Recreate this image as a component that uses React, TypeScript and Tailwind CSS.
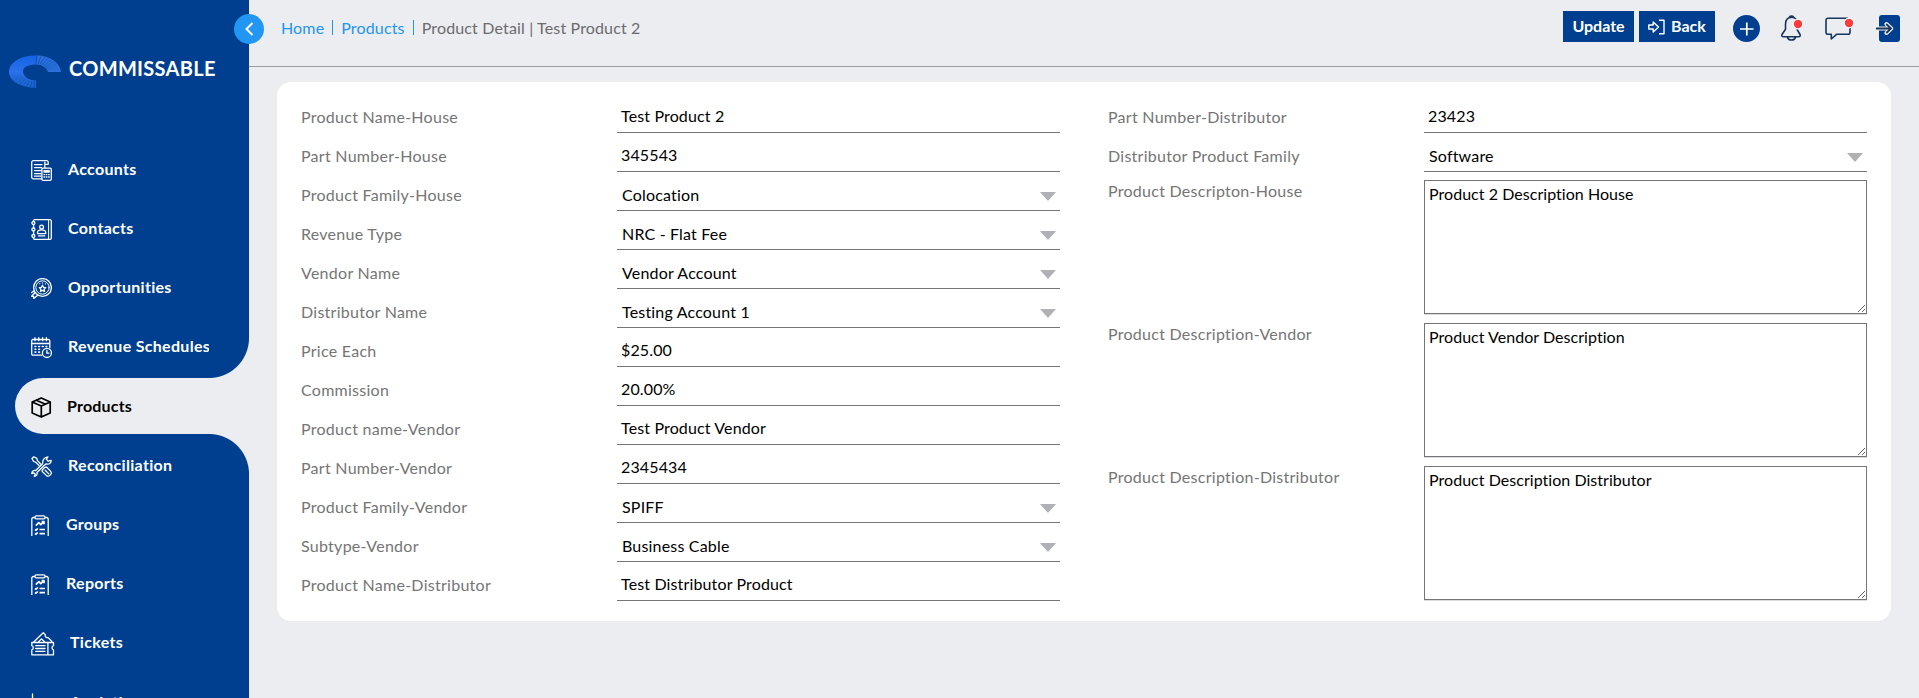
import React, { ReactNode } from "react";

type Row = { label: string; value: string; select?: boolean };

const leftRows: Row[] = [
  { label: "Product Name-House", value: "Test Product 2" },
  { label: "Part Number-House", value: "345543" },
  { label: "Product Family-House", value: "Colocation", select: true },
  { label: "Revenue Type", value: "NRC - Flat Fee", select: true },
  { label: "Vendor Name", value: "Vendor Account", select: true },
  { label: "Distributor Name", value: "Testing Account 1", select: true },
  { label: "Price Each", value: "$25.00" },
  { label: "Commission", value: "20.00%" },
  { label: "Product name-Vendor", value: "Test Product Vendor" },
  { label: "Part Number-Vendor", value: "2345434" },
  { label: "Product Family-Vendor", value: "SPIFF", select: true },
  { label: "Subtype-Vendor", value: "Business Cable", select: true },
  { label: "Product Name-Distributor", value: "Test Distributor Product" },
];

const rightRows: Row[] = [
  { label: "Part Number-Distributor", value: "23423" },
  { label: "Distributor Product Family", value: "Software", select: true },
];

const descriptions: Row[] = [
  { label: "Product Descripton-House", value: "Product 2 Description House" },
  { label: "Product Description-Vendor", value: "Product Vendor Description" },
  { label: "Product Description-Distributor", value: "Product Description Distributor" },
];

function Icon({ w = 21, h = 21, children }: { w?: number; h?: number; children: ReactNode }) {
  return (
    <svg width={w} height={h} viewBox={`0 0 ${w} ${h}`} fill="none" stroke="currentColor" strokeWidth="1.3" strokeLinecap="round" strokeLinejoin="round" className="mt-[3px] shrink-0">
      {children}
    </svg>
  );
}

const AccountsIcon = () => (
  <Icon>
    <path d="M10.500 18.800H2.200a1.500 1.500 0 0 1-1.500-1.500V2.200A1.500 1.500 0 0 1 2.200.7h13.300a1.600 1.600 0 0 1 1.700 1.700v1.900h-3.400V2.200M13.800 4v3.500M3.500 4.600h7.500M3.500 7.600h7M3.500 10.600h6.500M3.500 13.600h6.300M3.500 16.200h6.300" />
    <rect x="10.9" y="8.1" width="9.4" height="12.2" rx="1.2" />
    <path d="M13 10.600h5.200v1.400H13zM13 14.600h.6M15.300 14.600h.6M17.600 14.600h.6M13 17h.6M15.300 17h.6M17.600 17h.6" />
  </Icon>
);

const ContactsIcon = () => (
  <Icon>
    <path d="M2.400 2.200c0-1 .6-1.500 1.500-1.500h15a1.400 1.400 0 0 1 1.400 1.400v16.800a1.400 1.400 0 0 1-1.400 1.400h-15c-.9 0-1.500-.5-1.500-1.500M2.600 5.800v2.900M2.600 12.200v3" />
    <path d="M17.600 1v19" strokeWidth="1" />
    <circle cx="2.4" cy="4" r="1.5" />
    <circle cx="2.4" cy="10.5" r="1.5" />
    <circle cx="2.4" cy="17" r="1.5" />
    <circle cx="10.6" cy="8" r="1.9" />
    <path d="M6.500 14.600v-1c0-1.700 1.500-2.800 4.100-2.800s4.100 1.100 4.100 2.800v1zM7.500 16.900h6.200" />
  </Icon>
);

const OpportunitiesIcon = () => (
  <Icon>
    <circle cx="11.5" cy="9.5" r="8.9" />
    <circle cx="11.5" cy="9.5" r="6.7" strokeWidth="1" />
    <path d="m11.500 7.300 1 2 2.200.3-1.600 1.600.4 2.200-2-1-2 1 .4-2.200-1.600-1.600 2.200-.3zM8.700 5.800h.1M11.500 4.800v.1M14.300 5.800h.1" />
    <path d="m4 14.500-3.300 3.800 1.900.1.100 2 4-3.200M.7 14.500l2-1.500" />
  </Icon>
);

const RevenueIcon = () => (
  <Icon>
    <path d="M10.500 18.200H2a1.300 1.300 0 0 1-1.300-1.300V3.800A1.300 1.300 0 0 1 2 2.500h15.500a1.300 1.300 0 0 1 1.300 1.300v7M.7 6.500h18.100M4 .7v3M7.800.7v3M11.600.7v3M15.400.7v3" />
    <path d="M4 9.500h.8M7.700 9.500h.8M11.400 9.500h.8M15 9.500h.8M4 12.300h.8M7.700 12.300h.8M4 15.100h.8M7.700 15.100h.8" strokeWidth="1.6" />
    <circle cx="15.9" cy="15.9" r="4.5" />
    <path d="M15.900 13.500v2.700h2" />
  </Icon>
);

const ProductsIcon = () => (
  <Icon>
    <path strokeWidth="1.7" d="M10.300 1 19.200 5v11l-8.900 4L1.200 16V5zM1.200 5l9.100 4 8.900-4M10.300 9v11M5.300 3.200l9.200 4" />
  </Icon>
);

const ToolsIcon = () => (
  <Icon>
    <path d="m1 2.500 1.800-1.700 3 1.600.5 2 3.100 3.400M1 2.500l1.600 3 2 .6 3.200 3.200M13 9.500l-2 2-5 5c.6 1.900-.6 3.800-2.700 3.800l1-2-1.300-1.400-2.200.6c0-2.100 1.800-3.500 3.900-3l7-7C11.200 5.200 12.700.8 17 .8l-1.700 2.300 1.900 2.100 3-.8c0 2.800-2.400 4.400-4.900 3.500z" />
    <path d="m11.300 14 1.300-1.500 1.500-1.300c.7-.5 1.300-.2 1.900.3l3.700 3.900c1.900 2.300-1.800 6.300-4.400 4l-3.700-3.700c-.7-.6-.9-1.100-.3-1.700zM14.200 14.200l3.600 3.700" />
  </Icon>
);

const ClipboardIcon = () => (
  <Icon w={18} h={21}>
    <path strokeLinecap="butt" d="M.8 21V4a1.500 1.500 0 0 1 1.500-1.500H4M17.200 21V4a1.500 1.500 0 0 0-1.500-1.500H14" />
    <rect x="4" y=".8" width="10" height="3" rx="1.3" />
    <path strokeWidth="1.7" strokeLinecap="butt" d="m4.800 10.600 3-3 2 2 3-3M10.600 6.600H13v2.600M4 14.500l1 .7 1.800-1.700M8.500 14.500H14M4 18.500l1 .7 1.800-1.700M8.500 18.700H14" />
  </Icon>
);

const TicketsIcon = () => (
  <Icon w={24} h={24}>
    <path d="M.8 10.500h21.700v3.200c-2 .3-2 3.800 0 4.100v5H.8v-5c2-.3 2-3.800 0-4.100zM16.900 10.500v12.300M4.700 13.700H14M4.700 16.500H14M4.700 19.300H14M2.500 10.300l9.700-9.500 2 1.800c-.3 2.100 1 3.400 2.900 3l3.600 3.600v1M7 10.300l3.500-3.400 4 3.500" />
  </Icon>
);

const ChartIcon = () => (
  <Icon>
    <path d="M1.500 1v18.500H20M6 16v-5M10.500 16V7M15 16V9" />
  </Icon>
);

const navItems: { label: string; icon: ReactNode; gap: string; active?: boolean }[] = [
  { label: "Accounts", icon: <AccountsIcon />, gap: "gap-4" },
  { label: "Contacts", icon: <ContactsIcon />, gap: "gap-4" },
  { label: "Opportunities", icon: <OpportunitiesIcon />, gap: "gap-4" },
  { label: "Revenue Schedules", icon: <RevenueIcon />, gap: "gap-4" },
  { label: "Products", icon: <ProductsIcon />, gap: "gap-[15px]", active: true },
  { label: "Reconciliation", icon: <ToolsIcon />, gap: "gap-4" },
  { label: "Groups", icon: <ClipboardIcon />, gap: "gap-[17px]" },
  { label: "Reports", icon: <ClipboardIcon />, gap: "gap-[17px]" },
  { label: "Tickets", icon: <TicketsIcon />, gap: "gap-[15px]" },
  { label: "Analytics", icon: <ChartIcon />, gap: "gap-[18px]" },
];

function Logo() {
  const spokes = Array.from({ length: 9 }, (_, i) => i);
  return (
    <svg width="52" height="34" viewBox="0 0 52 34" className="mt-1 shrink-0">
      <defs>
        <linearGradient id="ring" x1="0" y1="0" x2="0" y2="1">
          <stop offset="0" stopColor="#1462e6" />
          <stop offset=".5" stopColor="#2a72ea" />
          <stop offset="1" stopColor="#1a62cc" />
        </linearGradient>
      </defs>
      <path d="M27 .5A26 16 0 0 0 0 17c0 8.500 11 15.500 27 16V25.500c-7 0-13-4-13-9S20 9.500 27 9.500z" fill="url(#ring)" />
      <path d="M27 .5c14 0 24.500 7.500 25 16.500H39c-1-4-6-7.500-12-7.500z" fill="#2a70dc" />
      {spokes.map((i) => {
        const a = (-86 + i * 9) * (Math.PI / 180);
        return <path key={i} d={`M${26 + 13 * Math.cos(a)} ${17 + 8 * Math.sin(a)}L${26 + 26 * Math.cos(a)} ${17 + 16 * Math.sin(a)}`} stroke="#0a4fac" strokeWidth="1" opacity={0.9 - i * 0.09} />;
      })}
      {spokes.map((i) => {
        const a = (92 + i * 9) * (Math.PI / 180);
        return <path key={i} d={`M${26 + 15 * Math.cos(a)} ${17 + 9 * Math.sin(a)}L${26 + 26 * Math.cos(a)} ${17 + 16 * Math.sin(a)}`} stroke="#0a4fac" strokeWidth="1" opacity={0.9 - i * 0.09} />;
      })}
    </svg>
  );
}

function Sidebar() {
  return (
    <aside className="relative h-[698px] w-[249px] shrink-0 bg-[#003f8f] font-bold tracking-[0.3px] text-white">
      <div className="flex h-[139px] items-center gap-2 pl-[9px]">
        <Logo />
        <span className="pb-[3px] text-[20px]">COMMISSABLE</span>
      </div>
      <nav className="h-[559px] overflow-hidden">
        {navItems.map((item) =>
          item.active ? (
            <div key={item.label} className="h-[59px] pt-[2px]">
              <div className="relative ml-[15px] flex h-14 items-center rounded-l-[28px] bg-[#ecedf1] pl-4 text-black">
                <div className={`flex items-center tracking-[0.2px] ${item.gap}`}>
                  {item.icon}
                  <span>{item.label}</span>
                </div>
                <div className="absolute -top-10 right-0 h-10 w-10 bg-[radial-gradient(circle_at_0_0,#003f8f_39.5px,#ecedf1_40.5px)]" />
                <div className="absolute right-0 -bottom-10 h-10 w-10 bg-[radial-gradient(circle_at_0_100%,#003f8f_39.5px,#ecedf1_40.5px)]" />
              </div>
            </div>
          ) : (
            <div key={item.label} className={`flex h-[59.25px] items-center pl-[31px] ${item.gap}`}>
              {item.icon}
              <span>{item.label}</span>
            </div>
          ),
        )}
      </nav>
      <button className="absolute top-[14px] -right-[15px] flex h-[30px] w-[30px] items-center justify-center rounded-full bg-[#2196f3]">
        <svg width="10" height="14" viewBox="0 0 10 14" fill="none" stroke="white" strokeWidth="2">
          <path d="M8.500 1 2.500 7l6 6" />
        </svg>
      </button>
    </aside>
  );
}

function Header() {
  return (
    <header className="flex h-[67px] items-start justify-between border-b border-[#9c9ca0] pr-[19px] pl-8">
      <div className="flex h-[55px] items-center gap-2 tracking-[0.15px] text-[#6b6b6d]">
        <a className="text-[#2196f3]">Home</a>
        <span className="h-[15px] w-px bg-[#2196f3]" />
        <a className="text-[#2196f3]">Products</a>
        <span className="h-[15px] w-px bg-[#2196f3]" />
        <span>Product Detail | Test Product 2</span>
      </div>
      <div className="flex items-start pt-[11px] text-[#003f8f]">
        <button className="h-[31px] w-[71px] bg-[#003f8f] pb-[2px] font-bold text-white">Update</button>
        <button className="ml-[5px] flex h-[31px] w-[76px] items-center justify-center gap-[6px] bg-[#003f8f] font-bold text-white">
          <svg width="17" height="16" viewBox="0 0 17 16" fill="none" stroke="currentColor" strokeWidth="1.4" strokeLinejoin="round">
            <path d="M.8 6h4.400V3l5.300 5-5.300 5v-3H.8zM11 1.200h5v13.600h-5" />
          </svg>
          <span className="pb-[2px]">Back</span>
        </button>
        <svg width="27" height="27" viewBox="0 0 27 27" className="mt-1 ml-[18px]">
          <circle cx="13.5" cy="13.5" r="13.5" fill="currentColor" />
          <path d="M7 14h13.500M13.800 7.500v13" stroke="white" strokeWidth="1.7" />
        </svg>
        <svg width="26" height="28" viewBox="0 0 26 28" fill="none" stroke="#17365a" strokeWidth="1.6" className="mt-1 ml-5">
          <path d="M12 2.200c-4 0-6.500 2.500-6.500 7v5L2 19.500c-.7 1.300 0 2.300 1.500 2.300h15c1.500 0 2.200-1 1.500-2.300l-2.600-4.500V9.200c0-4.500-2.400-7-5.400-7zM9.300 2.200c1-1.400 3.400-1.400 4.400 0M7.300 22c1 4 7.300 4 8.300 0" strokeLinejoin="round" />
          <circle cx="18" cy="9" r="4.8" fill="#fd3a3e" stroke="white" strokeWidth="1.2" />
        </svg>
        <svg width="34" height="28" viewBox="0 0 34 28" fill="none" stroke="#17365a" strokeWidth="1.6" className="mt-1 ml-[18px]">
          <path d="M24 3.200H4a2 2 0 0 0-2 2v12a2 2 0 0 0 2 2h3.300V24l5.500-4.800H24a2 2 0 0 0 2-2V8" strokeLinejoin="round" />
          <circle cx="25" cy="8" r="4.800" fill="#fd3a3e" stroke="white" strokeWidth="1.2" />
        </svg>
        <svg width="25" height="27" viewBox="0 0 25 27" fill="none" className="mt-1 ml-[17px]">
          <rect x="4" width="21" height="27" rx="3" fill="currentColor" />
          <path d="M1 13.500h15M11.500 9l4.700 4.500-4.700 4.500" stroke="#ecedf1" strokeWidth="4" strokeLinejoin="round" strokeLinecap="round" />
          <path d="M1 13.500h15M11.300 9l4.700 4.500-4.700 4.500" stroke="#17365a" strokeWidth="1.8" />
        </svg>
      </div>
    </header>
  );
}

function Field({ row }: { row: Row }) {
  return (
    <div className="flex h-[39px] items-start">
      <span className="w-[316px] pt-1 tracking-[0.27px] text-[#757575]">{row.label}</span>
      <div className="flex h-8 w-[443px] items-start justify-between border-b border-[#757575] pr-[4px] text-black">
        <span className={row.select ? "pt-1 pl-[5px] tracking-[0.18px]" : "pt-[3px] pl-1 tracking-[0.14px]"}>{row.value}</span>
        {row.select && (
          <svg width="16" height="9" viewBox="0 0 16 9" className="mt-[13px]">
            <path d="M0 0h16L8 9z" fill="#afb1b4" />
          </svg>
        )}
      </div>
    </div>
  );
}

export default function App() {
  return (
    <div className="flex h-[698px] w-full overflow-hidden bg-[#ecedf1] font-['Lato',sans-serif] text-[16px] leading-6">
      <Sidebar />
      <main className="min-w-0 flex-1">
        <Header />
        <section className="mt-[15px] ml-7 flex h-[539px] w-[1614px] rounded-[14px] bg-white pt-[19px] pl-6">
          <div className="w-[807px]">
            {leftRows.map((row) => (
              <Field key={row.label} row={row} />
            ))}
          </div>
          <div>
            {rightRows.map((row) => (
              <Field key={row.label} row={row} />
            ))}
            {descriptions.map((row) => (
              <div key={row.label} className="flex h-[143px] items-start">
                <span className="w-[316px] tracking-[0.27px] text-[#757575]">{row.label}</span>
                <textarea className="mt-px h-[134px] w-[443px] border border-[#757575] bg-white px-1 py-px tracking-[0.04px] text-black shadow-[0_1px_0_#dcdce0]" defaultValue={row.value} />
              </div>
            ))}
          </div>
        </section>
      </main>
    </div>
  );
}
